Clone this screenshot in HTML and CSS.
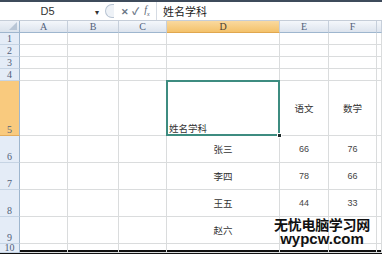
FILE: index.html
```html
<!DOCTYPE html>
<html lang="zh-CN">
<head>
  <meta charset="UTF-8">
  <title>Sheet</title>
  <link rel="stylesheet" href="styles.css">
</head>
<body>
  <div class="formula-bar">
    <div class="name-box">D5</div>
    <span class="drop">&#9662;</span>
    <div class="fx-tools">
      <span class="grip"></span>
      <span class="tool x">&#10005;</span>
      <span class="tool ok">&#10003;</span>
      <span class="tool fx">f<sub>x</sub></span>
    </div>
    <div class="formula">姓名学科</div>
  </div>

  <div class="sheet">
    <div class="corner"><span class="tri"></span></div>
    <div class="col-head">A</div>
    <div class="col-head">B</div>
    <div class="col-head">C</div>
    <div class="col-head active">D</div>
    <div class="col-head">E</div>
    <div class="col-head">F</div>
    <div class="col-head"></div>

    <div class="row-head">1</div><div class="cell"></div><div class="cell"></div><div class="cell"></div><div class="cell"></div><div class="cell"></div><div class="cell"></div><div class="cell"></div>
    <div class="row-head">2</div><div class="cell"></div><div class="cell"></div><div class="cell"></div><div class="cell"></div><div class="cell"></div><div class="cell"></div><div class="cell"></div>
    <div class="row-head">3</div><div class="cell"></div><div class="cell"></div><div class="cell"></div><div class="cell"></div><div class="cell"></div><div class="cell"></div><div class="cell"></div>
    <div class="row-head">4</div><div class="cell"></div><div class="cell"></div><div class="cell"></div><div class="cell"></div><div class="cell"></div><div class="cell"></div><div class="cell"></div>

    <div class="row-head active">5</div><div class="cell"></div><div class="cell"></div><div class="cell"></div>
    <div class="cell selected">姓名学科<span class="handle"></span></div>
    <div class="cell mid">语文</div><div class="cell mid">数学</div><div class="cell"></div>

    <div class="row-head">6</div><div class="cell"></div><div class="cell"></div><div class="cell"></div>
    <div class="cell mid">张三</div><div class="cell mid num">66</div><div class="cell mid num">76</div><div class="cell"></div>

    <div class="row-head">7</div><div class="cell"></div><div class="cell"></div><div class="cell"></div>
    <div class="cell mid">李四</div><div class="cell mid num">78</div><div class="cell mid num">66</div><div class="cell"></div>

    <div class="row-head">8</div><div class="cell"></div><div class="cell"></div><div class="cell"></div>
    <div class="cell mid">王五</div><div class="cell mid num">44</div><div class="cell mid num">33</div><div class="cell"></div>

    <div class="row-head">9</div><div class="cell"></div><div class="cell"></div><div class="cell"></div>
    <div class="cell mid">赵六</div><div class="cell mid num"></div><div class="cell mid num"></div><div class="cell"></div>

    <div class="row-head row-ten">10</div><div class="cell"></div><div class="cell"></div><div class="cell"></div><div class="cell"></div><div class="cell"></div><div class="cell"></div><div class="cell"></div>
  </div>

  <div class="bottom-bar"></div>

  <div class="watermark">
    <div class="wm-cn">无忧电脑学习网</div>
    <div class="wm-en">wypcw.com</div>
  </div>
</body>
</html>
```

FILE: styles.css
```css
* {
  box-sizing: border-box;
}
body {
  margin: 0;
  width: 382px;
  height: 254px;
  overflow: hidden;
  position: relative;
  background: #fff;
  font-family: "Noto Sans CJK SC", "Liberation Sans", sans-serif;
  color: #333;
}

/* formula bar */
.formula-bar {
  display: flex;
  align-items: center;
  height: 21px;
  border-top: 2px solid #3e4b5b;
  border-bottom: 1px solid #c5cdd8;
  background: #fff;
}
.name-box {
  width: 95px;
  height: 100%;
  text-align: center;
  font-family: "Liberation Sans", sans-serif;
  font-size: 11px;
  line-height: 18px;
  color: #333;
}
.drop {
  width: 8px;
  font-size: 8px;
  color: #333;
}
.fx-tools {
  display: flex;
  align-items: center;
  height: 100%;
  width: 54px;
  padding-left: 2px;
  border-right: 1px solid #d5dbe3;
}
.grip {
  width: 9px;
  height: 14px;
  margin-right: 7px;
  border: 1px solid #b8c4d3;
  border-right: none;
  border-radius: 8px 0 0 8px;
  background: #eef2f7;
}
.tool {
  font-size: 9px;
  font-weight: bold;
  color: #6b7686;
  line-height: 1;
}
.ok {
  margin-left: 3px;
  font-size: 10px;
}
.fx {
  margin-left: 5px;
  font-family: "Liberation Serif", serif;
  font-style: italic;
  font-weight: normal;
  font-size: 10px;
  color: #556070;
}
.fx sub {
  font-size: 6px;
}
.formula {
  padding-left: 6px;
  font-size: 11px;
  color: #222;
}

/* grid */
.sheet {
  display: grid;
  grid-template-columns: 20px 48px 51px 48px 113px 49px 48px 1fr;
  grid-template-rows: 12px 12px 12px 12px 12px 55px 27px 27px 27px 27px 1fr;
  height: 229px;
}
.corner {
  position: relative;
  background: linear-gradient(#eef2f8, #dae2ec);
  border-right: 1px solid #9eb6ce;
  border-bottom: 1px solid #9eb6ce;
}
.tri {
  position: absolute;
  right: 2px;
  bottom: 2px;
  border-left: 8px solid transparent;
  border-bottom: 8px solid #b9c6d6;
}
.col-head {
  background: linear-gradient(#f4f7fb, #dde4ee);
  border-right: 1px solid #c6cfdb;
  border-bottom: 1px solid #9eb6ce;
  font-family: "Liberation Serif", serif;
  font-size: 10px;
  line-height: 11px;
  text-align: center;
  color: #52617a;
}
.col-head.active {
  background: linear-gradient(#f9d99f, #f4c26b);
  border-bottom-color: #e0a74f;
  color: #4a4030;
}
.row-head {
  background: #e4ecf7;
  border-right: 1px solid #9eb6ce;
  border-bottom: 1px solid #c6d4e4;
  font-family: "Liberation Serif", serif;
  font-size: 10px;
  text-align: center;
  color: #52617a;
  display: flex;
  align-items: flex-end;
  justify-content: center;
  line-height: 11px;
}
.row-head.active {
  background: #f9ca7e;
  border-bottom-color: #e3ad5e;
}
.row-ten {
  align-items: flex-start;
  line-height: 8px;
}
.cell {
  border-right: 1px solid #dadcdd;
  border-bottom: 1px solid #dadcdd;
  font-size: 9.5px;
  color: #333;
}
.mid {
  display: flex;
  align-items: center;
  justify-content: center;
}
.num {
  font-family: "Liberation Sans", sans-serif;
  font-size: 9px;
  color: #444;
}
.selected {
  position: relative;
  border: 2px solid #3d8c80;
  margin: -1px 0 0 -1px;
  display: flex;
  align-items: flex-end;
  padding-left: 1px;
  line-height: 12px;
}
.handle {
  position: absolute;
  right: -4px;
  bottom: -4px;
  width: 5px;
  height: 5px;
  background: #1e2a2a;
  border: 1px solid #fff;
}

.bottom-bar {
  height: 4px;
  background: #111;
}

/* watermark over the table */
.watermark {
  position: absolute;
  left: 270px;
  top: 216px;
  width: 104px;
  text-align: center;
  color: #111;
  font-weight: bold;
}
.wm-cn {
  font-size: 14px;
  line-height: 16px;
  letter-spacing: -0.3px;
}
.wm-en {
  font-family: "Liberation Sans", sans-serif;
  font-size: 15px;
  line-height: 13px;
}
```
